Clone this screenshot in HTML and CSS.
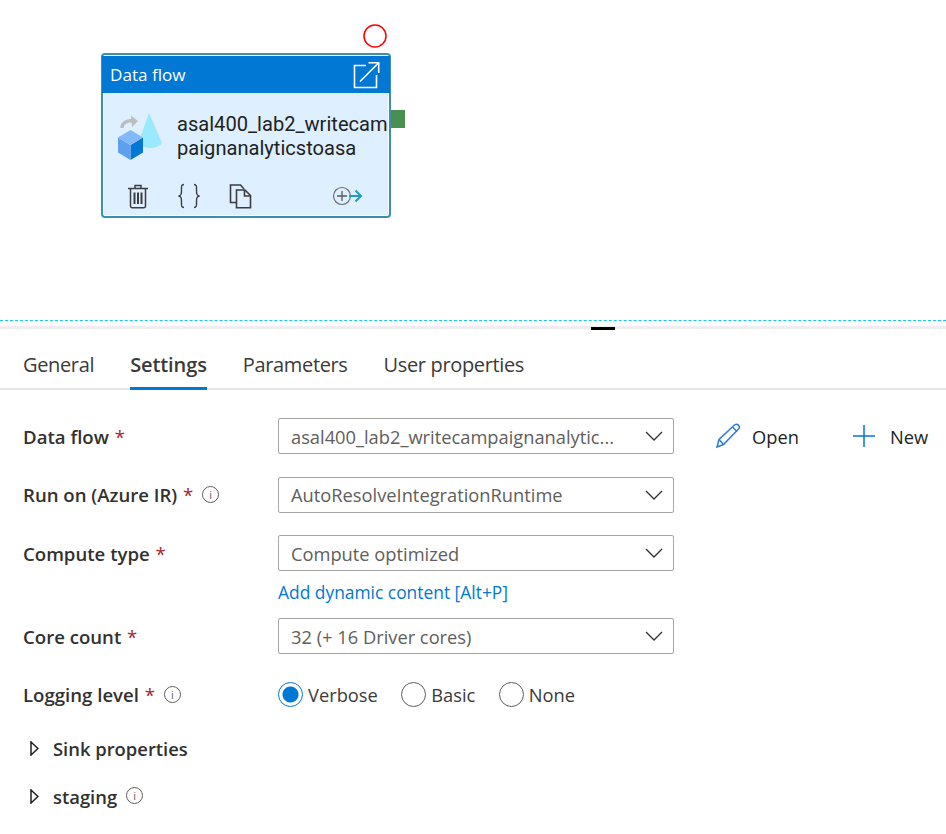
FILE: index.html
```html
<!DOCTYPE html>
<html lang="en">
<head>
  <meta charset="UTF-8">
  <title>Data flow settings</title>
  <link rel="stylesheet" href="styles.css">
</head>
<body>
  <div class="canvas">
    <svg class="red-ring" width="24" height="24" viewBox="0 0 24 24" fill="none" stroke="#f00" stroke-width="1.500">
      <circle cx="12" cy="12" r="11"/>
    </svg>
    <div class="node">
      <div class="node-head">
        <span>Data flow</span>
        <svg class="node-open" width="28" height="28" viewBox="0 0 28 28" fill="none" stroke="#fff" stroke-width="1.6">
          <path d="M14 4.500H2.500V26.500H24.500V14"/>
          <path d="M8 20.500L26 2.500M16.500 1.800H26.700V12"/>
        </svg>
      </div>
      <div class="node-body">
        <svg class="node-icon" width="46" height="48" viewBox="0 0 46 48">
          <path d="M32 0L45 30C41 36 27 37 21 31Z" fill="#9be9ff"/>
          <path d="M5 15C5 10 10 7 16 8" fill="none" stroke="#bdbdbd" stroke-width="3.400"/>
          <path d="M14 2.500L21 8L15 14Z" fill="#bdbdbd"/>
          <path d="M13.500 32L26 24.500V39.500L13.500 47Z" fill="#0078d4"/>
          <path d="M1 24.500L13.500 32V47L1 39.500Z" fill="#5ea0ef"/>
          <path d="M13.500 17L26 24.500L13.500 32L1 24.500Z" fill="#83b9f9"/>
        </svg>
        <div class="node-name">asal400_lab2_writecam<br>paignanalyticstoasa</div>
      </div>
      <div class="node-actions">
        <svg class="act-trash" width="22" height="25" viewBox="0 0 22 25" fill="none" stroke="#3c3c41" stroke-width="1.500">
          <path d="M1 4.500H21M3.500 4.500V22C3.500 23 4.200 23.700 5 23.700H17C17.800 23.700 18.500 23 18.500 22V4.500M8 4.500V1.500H14V4.500"/>
          <path d="M7.500 8.500V20M11 8.500V20M14.500 8.500V20" stroke-width="2"/>
        </svg>
        <svg class="act-code" width="24" height="26" viewBox="0 0 24 26" fill="none" stroke="#3c3c41" stroke-width="1.400">
          <path d="M7 1.500C4 1.500 4.500 4 4.500 7C4.500 10.500 4.500 12.500 1.500 13C4.500 13.500 4.500 15.500 4.500 19C4.500 22 4 24.500 7 24.500"/>
          <path d="M17 1.500C20 1.500 19.500 4 19.500 7C19.500 10.500 19.500 12.500 22.500 13C19.500 13.500 19.500 15.500 19.500 19C19.500 22 20 24.500 17 24.500"/>
        </svg>
        <svg class="act-copy" width="23" height="25" viewBox="0 0 23 25" fill="none" stroke="#3c3c41" stroke-width="1.600">
          <path d="M7 18.500H1.500V1H11.500L15 5"/>
          <path d="M7.500 6H16L21.500 11.500V23.800H7.500Z" fill="#deefff"/>
          <path d="M15.500 6V12H21.500"/>
        </svg>
        <svg class="act-add" width="31" height="20" viewBox="0 0 31 20" fill="none">
          <circle cx="10" cy="10" r="8.500" stroke="#6e6e73" stroke-width="1.200"/>
          <path d="M5 10H15M10 5V15" stroke="#5a5a5f" stroke-width="1.300"/>
          <path d="M17 10H29M23.500 4.500L29 10L23.500 15.500" stroke="#1f9cc6" stroke-width="2"/>
        </svg>
      </div>
    </div>
    <div class="node-port"></div>
  </div>

  <div class="splitter"><div class="splitter-grip"></div></div>

  <div class="tabs">
    <a class="tab">General</a>
    <a class="tab active">Settings</a>
    <a class="tab">Parameters</a>
    <a class="tab">User properties</a>
  </div>

  <div class="form">
    <div class="row">
      <label class="field-label">Data flow <b>*</b></label>
      <div class="select"><span>asal400_lab2_writecampaignanalytic...</span><svg class="chev" width="18" height="10" viewBox="0 0 18 10"><path d="M1 1L9 9L17 1"/></svg></div>
      <a class="cmd cmd-open">
        <svg width="26" height="26" viewBox="0 0 26 26" fill="none" stroke="#2b7cd3" stroke-width="1.500">
          <path d="M2 24L4 16.500L19.500 2C21 1 22.500 1 23.500 2.200C24.700 3.500 24.500 5 23.500 6L8.500 21.500Z"/>
          <path d="M4 16.500L8.500 21.500M17.500 4L22 8.500"/>
        </svg>
        Open
      </a>
      <a class="cmd cmd-new">
        <svg width="24" height="24" viewBox="0 0 24 24" fill="none" stroke="#0078d4" stroke-width="1.500">
          <path d="M1 12H23M12 1V23"/>
        </svg>
        New
      </a>
    </div>
    <div class="row">
      <label class="field-label">Run on (Azure IR) <b>*</b> <i class="info">i</i></label>
      <div class="select"><span>AutoResolveIntegrationRuntime</span><svg class="chev" width="18" height="10" viewBox="0 0 18 10"><path d="M1 1L9 9L17 1"/></svg></div>
    </div>
    <div class="row row-tight">
      <label class="field-label">Compute type <b>*</b></label>
      <div class="select"><span>Compute optimized</span><svg class="chev" width="18" height="10" viewBox="0 0 18 10"><path d="M1 1L9 9L17 1"/></svg></div>
    </div>
    <a class="dynamic">Add dynamic content [Alt+P]</a>
    <div class="row">
      <label class="field-label">Core count <b>*</b></label>
      <div class="select"><span>32 (+ 16 Driver cores)</span><svg class="chev" width="18" height="10" viewBox="0 0 18 10"><path d="M1 1L9 9L17 1"/></svg></div>
    </div>
    <div class="row row-radio">
      <label class="field-label">Logging level <b>*</b> <i class="info">i</i></label>
      <div class="radios">
        <span class="radio on"><i></i>Verbose</span>
        <span class="radio"><i></i>Basic</span>
        <span class="radio"><i></i>None</span>
      </div>
    </div>
    <div class="section">
      <svg class="caret" width="9" height="15" viewBox="0 0 9 15"><path d="M1 1L8 7.500L1 14Z"/></svg>
      <span>Sink properties</span>
    </div>
    <div class="section">
      <svg class="caret" width="9" height="15" viewBox="0 0 9 15"><path d="M1 1L8 7.500L1 14Z"/></svg>
      <span>staging</span> <i class="info">i</i>
    </div>
  </div>
</body>
</html>
```

FILE: styles.css
```css
body {
  margin: 0;
  font-family: "Open Sans", "Noto Sans", sans-serif;
  font-size: 18.3px;
  color: #323130;
  background: #fff;
  overflow: hidden;
}
.canvas {
  position: relative;
  height: 320px;
  border-bottom: 1px dashed #19c8e8;
}
.red-ring {
  position: absolute;
  left: 363px;
  top: 24px;
}
.node {
  position: absolute;
  left: 101px;
  top: 53px;
  width: 286px;
  height: 161px;
  border: 2px solid #3d8fae;
  border-radius: 4px;
  background: #deefff;
  box-shadow: inset 0 0 0 1px #fff;
  display: flex;
  flex-direction: column;
}
.node-head {
  margin: 1px -1px 0;
  height: 37px;
  background: #0078d4;
  color: #fff;
  display: flex;
  align-items: center;
  justify-content: space-between;
  padding: 0 10px 0 8px;
  font-size: 17.1px;
}
.node-body {
  display: flex;
  align-items: flex-start;
  padding: 19px 0 0 14px;
}
.node-icon { flex: none; margin-top: 1px; }
.node-name {
  margin-left: 14px;
  font-family: Roboto, sans-serif;
  font-size: 20.1px;
  line-height: 24px;
  color: #222;
  white-space: nowrap;
}
.node-actions {
  display: flex;
  align-items: center;
  margin-top: 22px;
  padding-left: 24px;
}
.act-code { margin-left: 28px; }
.act-copy { margin-left: 28px; }
.act-add { margin-left: 80px; }
.node-port {
  position: absolute;
  left: 391px;
  top: 110px;
  width: 14px;
  height: 18px;
  background: #4a8f52;
}
.splitter {
  position: relative;
  height: 3px;
  margin-top: 5px;
  background: #eee;
}
.splitter-grip {
  position: absolute;
  left: 591px;
  top: 1px;
  width: 24px;
  height: 3px;
  background: #000;
}
.tabs {
  display: flex;
  gap: 36px;
  height: 61px;
  padding-left: 23px;
  border-bottom: 2px solid #e6e6e6;
  box-sizing: border-box;
}
.tab {
  display: block;
  height: 61px;
  box-sizing: border-box;
  padding-top: 23px;
  line-height: 26px;
  font-size: 20px;
  letter-spacing: -0.35px;
  color: #3b3a39;
}
.tab.active {
  font-weight: 600;
  letter-spacing: -0.1px;
  border-bottom: 3px solid #0078d4;
}
.form {
  padding: 28px 0 0 23px;
}
.row {
  display: flex;
  align-items: center;
  height: 36px;
  margin-bottom: 22.5px;
}
.row-tight { margin-bottom: 0; }
.field-label {
  flex: none;
  width: 255px;
  font-size: 18.6px;
  font-weight: 600;
  white-space: nowrap;
}
.field-label b { color: #a4262c; font-weight: 400; margin-left: 1px; }
.info {
  display: inline-block;
  width: 15px;
  height: 15px;
  margin-left: 4px;
  border: 1px solid #605e5c;
  border-radius: 50%;
  font-size: 11px;
  font-style: normal;
  font-weight: 400;
  line-height: 15px;
  text-align: center;
  vertical-align: 3px;
  color: #605e5c;
}
.select {
  flex: none;
  width: 396px;
  height: 36px;
  box-sizing: border-box;
  display: flex;
  align-items: center;
  justify-content: space-between;
  padding: 0 10px 0 12px;
  border: 1px solid #a8a6a4;
  border-radius: 2px;
  color: #605e5c;
  white-space: nowrap;
}
.chev { fill: none; stroke: #323130; stroke-width: 1.3; }
.cmd {
  display: flex;
  align-items: center;
  gap: 11px;
  color: #201f1e;
}
.cmd-open { margin-left: 41px; }
.cmd-new { margin-left: 53px; gap: 14px; }
.dynamic {
  display: block;
  margin: 9px 0 14px 255px;
  line-height: 24px;
  font-size: 17.4px;
  color: #0078d4;
}
.row-radio { margin-bottom: 23.5px; }
.radios { display: flex; gap: 23.5px; }
.radio { display: flex; align-items: center; gap: 5px; color: #3b3a39; }
.radio i {
  width: 25px;
  height: 25px;
  box-sizing: border-box;
  border: 1.5px solid #605e5c;
  border-radius: 50%;
  display: block;
}
.radio.on i {
  border-color: #0078d4;
  background: radial-gradient(circle, #0078d4 7.5px, #fff 8.5px);
}
.section {
  display: flex;
  align-items: center;
  height: 24px;
  margin: 0 0 24px 7px;
  font-size: 18.4px;
  font-weight: 600;
}
.caret { fill: none; stroke: #201f1e; stroke-width: 1.5; margin-right: 14px; }
.section .info { margin-left: 9px; margin-top: -2px; }
```
